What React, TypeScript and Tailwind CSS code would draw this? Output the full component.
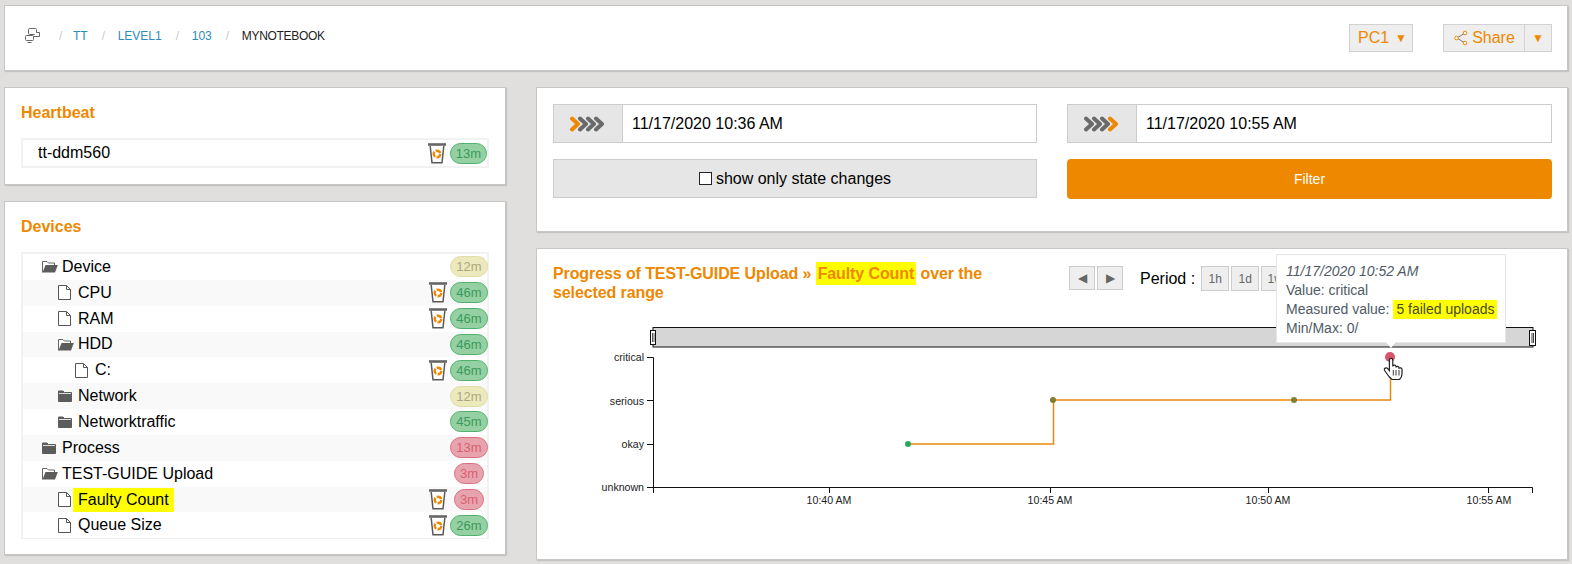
const ORANGE = '#ee8800';

function Chevrons({ active }: { active: number }) {
  return (
    <svg width="38" height="16" viewBox="0 0 38 16" fill="none" strokeWidth="4" strokeLinejoin="round" strokeLinecap="round">
      {[0, 1, 2, 3].map((i) => (
        <path key={i} d={`M${3 + i * 8} 2.5 L${9 + i * 8} 8 L${3 + i * 8} 13.5`} stroke={i === active ? ORANGE : '#6a6a6a'} />
      ))}
    </svg>
  );
}

function TrashIcon() {
  return (
    <svg width="18" height="21" viewBox="0 0 18 21" fill="none" className="shrink-0">
      <path d="M0 1.5 H18" stroke="#666" strokeWidth="2.6" />
      <path d="M2.2 3 L4 19.8 H14 L15.8 3" stroke="#5a5a5a" strokeWidth="1.5" fill="#fff" />
      <circle cx="9" cy="11" r="3.3" stroke={ORANGE} strokeWidth="2.4" strokeDasharray="5.5 1.4" />
    </svg>
  );
}

function FileIcon() {
  return (
    <svg width="13" height="15" viewBox="0 0 13 15" fill="#fff" stroke="#555" strokeWidth="1" className="shrink-0">
      <path d="M0.5 0.5 H8.5 L12.5 4.5 V14.5 H0.5 Z" />
      <path d="M8.5 0.5 V4.5 H12.5" fill="none" />
    </svg>
  );
}

function FolderOpenIcon() {
  return (
    <svg width="16" height="13" viewBox="0 0 16 13" className="shrink-0">
      <path d="M0.5 12.5 V1.5 H5 L6.5 3 H12.5 V5" fill="#fff" stroke="#666" strokeWidth="1" />
      <path d="M0.5 12.5 L3.5 5 H15.8 L13 12.5 Z" fill="#5c5c5c" />
    </svg>
  );
}

function FolderIcon() {
  return (
    <svg width="14" height="12" viewBox="0 0 14 12" className="shrink-0">
      <path d="M0.5 11.5 V1 H5 L6.5 2.5 H13.5 V11.5 Z" fill="#5c5c5c" stroke="#5c5c5c" strokeWidth="1" />
      <path d="M1 3.5 H13" stroke="#fff" strokeWidth="0.8" />
    </svg>
  );
}

function MonitorsIcon() {
  return (
    <svg width="15" height="15" viewBox="0 0 15 15" fill="#fff" stroke="#666" strokeWidth="1" className="mr-[19px] mt-[-1px] shrink-0">
      <rect x="3.5" y="0.5" width="8" height="6" rx="1" />
      <path d="M11.5 4.5 H14.5 V8.5 H8" />
      <rect x="0.5" y="7.5" width="8" height="5" rx="1" />
      <path d="M2.5 14.5 H6.5" />
    </svg>
  );
}

function ShareIcon() {
  return (
    <svg width="14" height="16" viewBox="0 0 14 16" fill="none">
      <path d="M11 3 L3 8 L11 13" stroke="#777" strokeWidth="1" />
      <circle cx="11" cy="3" r="1.8" fill="#fff" stroke={ORANGE} />
      <circle cx="2.5" cy="8" r="1.8" fill="#fff" stroke={ORANGE} />
      <circle cx="11" cy="13" r="1.8" fill="#fff" stroke={ORANGE} />
    </svg>
  );
}

type Status = 'ok' | 'warn' | 'bad';

function Badge({ status, label }: { status: Status; label: string }) {
  const colors =
    status === 'ok'
      ? 'bg-[#94d0a2] border-[#52b06e] text-[#3a9a5c]'
      : status === 'warn'
        ? 'bg-[#ece9bd] border-[#e0dca4] text-[#ada780]'
        : 'bg-[#e8a4ae] border-[#d9707e] text-[#d85f70]';
  return (
    <span className={`inline-flex h-[21px] items-center justify-center rounded-full border px-[5px] text-[13px] leading-none ${colors}`}>
      {label}
    </span>
  );
}

interface TreeRow {
  name: string;
  level: number;
  icon: 'file' | 'open' | 'folder';
  status: Status;
  age: string;
  trash?: boolean;
  mark?: boolean;
}

const rows: TreeRow[] = [
  { name: 'Device', level: 1, icon: 'open', status: 'warn', age: '12m' },
  { name: 'CPU', level: 2, icon: 'file', status: 'ok', age: '46m', trash: true },
  { name: 'RAM', level: 2, icon: 'file', status: 'ok', age: '46m', trash: true },
  { name: 'HDD', level: 2, icon: 'open', status: 'ok', age: '46m' },
  { name: 'C:', level: 3, icon: 'file', status: 'ok', age: '46m', trash: true },
  { name: 'Network', level: 2, icon: 'folder', status: 'warn', age: '12m' },
  { name: 'Networktraffic', level: 2, icon: 'folder', status: 'ok', age: '45m' },
  { name: 'Process', level: 1, icon: 'folder', status: 'bad', age: '13m' },
  { name: 'TEST-GUIDE Upload', level: 1, icon: 'open', status: 'bad', age: '3m' },
  { name: 'Faulty Count', level: 2, icon: 'file', status: 'bad', age: '3m', trash: true, mark: true },
  { name: 'Queue Size', level: 2, icon: 'file', status: 'ok', age: '26m', trash: true },
];

function Row({ row, striped }: { row: TreeRow; striped: boolean }) {
  const indent = row.level === 1 ? 'pl-[19px]' : row.level === 2 ? 'pl-[35px]' : 'pl-[52px]';
  return (
    <div className={`flex h-[25.85px] items-center ${indent} ${striped ? 'bg-[#f9f9f9]' : 'bg-white'}`}>
      <span className="flex w-[20px] shrink-0 items-center">
        {row.icon === 'file' ? <FileIcon /> : row.icon === 'open' ? <FolderOpenIcon /> : <FolderIcon />}
      </span>
      {row.mark ? (
        <span className="ml-[-5px] flex h-[24px] items-center bg-[#ffff00] px-[5px] text-base text-black">{row.name}</span>
      ) : (
        <span className="text-base text-black">{row.name}</span>
      )}
      <span className="ml-auto flex items-center gap-[4px]">
        {row.trash && <TrashIcon />}
        <span className="flex w-[36px] justify-center">
          <Badge status={row.status} label={row.age} />
        </span>
      </span>
    </div>
  );
}

function Card({ className, children }: { className: string; children: React.ReactNode }) {
  return <section className={`border border-[#c6c6c6] bg-white shadow-[1px_1px_1px_rgba(0,0,0,0.12)] ${className}`}>{children}</section>;
}

function Crumb({ label, last }: { label: string; last?: boolean }) {
  return (
    <>
      {label !== 'TT' && (
        <span className="w-[30px] shrink-0 pl-[14px] text-[#ccc]" aria-hidden>
          /
        </span>
      )}
      {label === 'TT' && (
        <span className="w-[14px] shrink-0 text-[#ccc]" aria-hidden>
          /
        </span>
      )}
      <span className={last ? 'tracking-[-0.3px] text-[#222]' : 'text-[#2b8cb8]'}>{label}</span>
    </>
  );
}

function DateInput({ active, value }: { active: number; value: string }) {
  return (
    <div className="flex h-[39px] border border-[#ccc]">
      <div className="flex w-[69px] shrink-0 items-center justify-center border-r border-[#ccc] bg-[#e6e6e6]">
        <Chevrons active={active} />
      </div>
      <div className="flex flex-1 items-center bg-white pl-[9px] text-base text-black">{value}</div>
    </div>
  );
}

function PeriodButton({ label }: { label: string }) {
  return (
    <span className="flex h-[25px] w-[28px] items-center justify-center border border-[#ccc] bg-[#eee] text-xs text-[#666]">{label}</span>
  );
}

function Chart() {
  const axis = '#111';
  return (
    <svg viewBox="537 318 1030 241" width="1030" height="241" className="block" fontFamily="'Liberation Sans', Arial, sans-serif">
      <rect x="653" y="327.5" width="880" height="19.5" fill="#d6d6d6" stroke={axis} />
      <rect x="650.5" y="330.5" width="5" height="14" fill="#fff" stroke={axis} />
      <path d="M652.5 333 V342 M654 333 V342" stroke={axis} strokeWidth="0.7" />
      <rect x="1529.5" y="330.5" width="6" height="15" fill="#fff" stroke={axis} />
      <path d="M1532 333 V343 M1533.5 333 V343" stroke={axis} strokeWidth="0.8" />

      <path d="M647 357.5 H653.5 V487.5 H1532.5 V493 M647 400.5 H653 M647 444.5 H653 M647 487.5 H653 M653.5 487 V493 M829.5 487 V493 M1050.5 487 V493 M1268.5 487 V493 M1488.5 487 V493" fill="none" stroke={axis} />
      {[
        ['critical', 361],
        ['serious', 404.5],
        ['okay', 448],
        ['unknown', 491],
      ].map(([t, y]) => (
        <text key={t} x="644" y={y} textAnchor="end" fontSize="10.6" fill="#222">
          {t}
        </text>
      ))}
      {[
        ['10:40 AM', 829],
        ['10:45 AM', 1050],
        ['10:50 AM', 1268],
        ['10:55 AM', 1489],
      ].map(([t, x]) => (
        <text key={t} x={x} y="503.5" textAnchor="middle" fontSize="10.6" fill="#222">
          {t}
        </text>
      ))}

      <path d="M908 444 H1053.5 V400 H1390.5 V358" fill="none" stroke="#e8890c" strokeWidth="1.5" />
      <circle cx="908" cy="444" r="3" fill="#2aa85c" />
      <circle cx="1053" cy="400" r="3" fill="#7f7f2e" />
      <circle cx="1294" cy="400" r="3" fill="#7f7f2e" />
      <circle cx="1390" cy="357" r="5" fill="#d9566a" />

      {/* hand cursor */}
      <path
        d="M1389 376.5 L1384.6 370.5 C1383.4 368.2 1386.2 367 1388 368.8 L1389.4 370.6 V360.2 C1389.4 357.8 1392.8 357.8 1392.8 360.2 V366.5 C1392.8 364.8 1396 364.8 1396 366.5 V367.5 C1396 366 1399 366 1399 367.7 V368.7 C1399 367.4 1402 367.4 1402 369.2 V374 C1402 376.5 1401 378 1399.5 379.5 H1392 Z"
        fill="#fff"
        stroke="#222"
        strokeWidth="1.2"
      />
      <path d="M1393.3 370 V375.5 M1396 370 V375.5 M1399 370 V375.5" stroke="#222" strokeWidth="0.9" />
    </svg>
  );
}

function Tooltip() {
  return (
    <div className="absolute left-[739px] top-[5px] h-[89px] w-[230px] border border-[#e6e6e6] bg-white pl-[9px] pt-[7px] text-sm leading-[19px] text-[#505a66]">
      <div className="italic">11/17/2020 10:52 AM</div>
      <div>Value: critical</div>
      <div>
        Measured value: <span className="inline-block bg-[#ffff00] px-[3px] text-[#4a4a20]">5 failed uploads</span>
      </div>
      <div>Min/Max: 0/</div>
      <span className="absolute left-[109px] top-[87px] h-0 w-0 border-x-[5px] border-t-[6px] border-x-transparent border-t-white" />
    </div>
  );
}

export default function App() {
  return (
    <div className="flex h-[564px] w-[1572px] flex-col gap-[16px] overflow-hidden bg-[#e0dfdd] px-[4px] pt-[5px] font-['Liberation_Sans',Arial,sans-serif]">
      <Card className="flex h-[66px] shrink-0 items-start pl-[20px] pr-[15px] pt-[18px]">
        <div className="flex h-[24px] items-center text-xs">
          <MonitorsIcon />
          <Crumb label="TT" />
          <Crumb label="LEVEL1" />
          <Crumb label="103" />
          <Crumb label="MYNOTEBOOK" last />
        </div>
        <div className="ml-auto flex items-center gap-[30px] text-base text-[#ee8800]">
          <button className="flex h-[28px] w-[64px] items-center justify-center gap-[6px] border border-[#d2d2d2] bg-[#eee] pl-[3px]">
            PC1 <span className="text-[12px] leading-none">▼</span>
          </button>
          <div className="flex h-[28px] border border-[#d2d2d2] bg-[#eee]">
            <button className="flex w-[80px] items-center justify-center gap-[4px] pl-[1px]">
              <ShareIcon /> Share
            </button>
            <button className="w-[27px] border-l border-[#d2d2d2] text-[12px] leading-none">▼</button>
          </div>
        </div>
      </Card>

      <div className="flex min-h-0 flex-1 gap-[30px]">
        <div className="flex w-[502px] shrink-0 flex-col gap-[16px]">
          <Card className="h-[98px] px-[16px] pt-[13px]">
            <h2 className="text-base font-bold text-[#ee8800]">Heartbeat</h2>
            <div className="mt-[13px] border-2 border-[#f2f2f2]">
              <div className="flex h-[26px] items-center pl-[15px]">
                <span className="text-base text-black">tt-ddm560</span>
                <span className="ml-auto flex items-center gap-[4px]">
                  <TrashIcon />
                  <Badge status="ok" label="13m" />
                </span>
              </div>
            </div>
          </Card>
          <Card className="h-[354px] px-[16px] pt-[13px]">
            <h2 className="text-base font-bold text-[#ee8800]">Devices</h2>
            <div className="mt-[13px] border-2 border-b border-[#f2f2f2]">
              {rows.map((row, i) => (
                <Row key={row.name} row={row} striped={i % 2 === 1} />
              ))}
            </div>
          </Card>
        </div>

        <div className="flex min-w-0 flex-1 flex-col gap-[16px]">
          <Card className="h-[145px] shrink-0 px-[16px] pt-[16px]">
            <div className="grid grid-cols-[484px_485px] gap-x-[30px] gap-y-[16px]">
              <DateInput active={0} value="11/17/2020 10:36 AM" />
              <DateInput active={3} value="11/17/2020 10:55 AM" />
              <label className="flex h-[39px] items-center justify-center gap-[4px] border border-[#ccc] bg-[#e6e6e6] text-base text-black">
                <span className="h-[13px] w-[13px] border border-[#222] bg-white" />
                show only state changes
              </label>
              <button className="h-[40px] rounded-[4px] bg-[#ee8800] text-sm text-white">Filter</button>
            </div>
          </Card>

          <Card className="relative h-[312px] overflow-hidden">
            <div className="flex h-[69px] items-start pl-[16px] pt-[15px]">
              <h2 className="w-[516px] shrink-0 text-base font-bold leading-[19px] tracking-[-0.1px] text-[#ee8800]">
                Progress of TEST-GUIDE Upload » <mark className="bg-[#ffff00] px-[2px] py-[3px] text-[#ee8800]">Faulty Count</mark> over the
                <br />
                selected range
              </h2>
              <div className="mt-[2px] flex gap-[2px]">
                <span className="flex h-[24px] w-[26px] items-center justify-center border border-[#ccc] bg-[#eee] text-xs text-[#666]">◀</span>
                <span className="flex h-[24px] w-[26px] items-center justify-center border border-[#ccc] bg-[#eee] text-xs text-[#666]">▶</span>
              </div>
              <span className="ml-[17px] mr-[6px] mt-[2px] text-base leading-[26px] text-black">Period :</span>
              <div className="mt-[2px] flex gap-[2px]">
                <PeriodButton label="1h" />
                <PeriodButton label="1d" />
                <PeriodButton label="1w" />
              </div>
            </div>
            <Chart />
            <Tooltip />
          </Card>
        </div>
      </div>
    </div>
  );
}
